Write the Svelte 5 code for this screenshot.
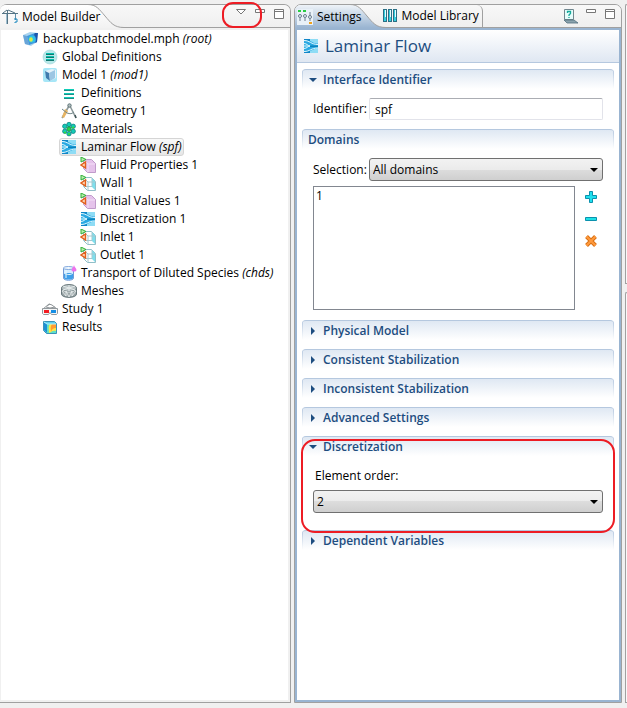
<script>
    let tree = [
        { level: 0, icon: "root", label: "backupbatchmodel.mph", tag: "root" },
        { level: 1, icon: "globals", label: "Global Definitions" },
        { level: 1, icon: "model", label: "Model 1", tag: "mod1" },
        { level: 2, icon: "definitions", label: "Definitions" },
        { level: 2, icon: "geometry", label: "Geometry 1" },
        { level: 2, icon: "materials", label: "Materials" },
        { level: 2, icon: "flow", label: "Laminar Flow", tag: "spf" },
        { level: 3, icon: "domain", label: "Fluid Properties 1" },
        { level: 3, icon: "boundary", label: "Wall 1" },
        { level: 3, icon: "domain", label: "Initial Values 1" },
        { level: 3, icon: "flow", label: "Discretization 1" },
        { level: 3, icon: "boundary", label: "Inlet 1" },
        { level: 3, icon: "boundary", label: "Outlet 1" },
        { level: 2, icon: "species", label: "Transport of Diluted Species", tag: "chds" },
        { level: 2, icon: "mesh", label: "Meshes" },
        { level: 1, icon: "study", label: "Study 1" },
        { level: 1, icon: "results", label: "Results" },
    ];

    let selected = $state(6);
    let identifier = $state("spf");
    let open = $state({ identifier: true, discretization: true });

    function toggle(key) {
        open[key] = !open[key];
    }
</script>

{#snippet icon(name)}
    <svg class="icon" viewBox="0 0 16 16" width="16" height="16" aria-hidden="true">
        {#if name === "root"}
            <path d="M0 4l7-3 8 1-1 9-6 4-6-2z" fill="#a9d3ee" />
            <path d="M0 4l4 1 2 9-4-1z" fill="#69a5d8" />
            <path d="M4 5l8-3 2 9-8 3z" fill="#3f97dc" />
            <ellipse cx="9" cy="8" rx="3.500" ry="3.500" fill="#2cc3ea" />
            <ellipse cx="8" cy="8.500" rx="1.800" ry="2.200" fill="#d9ee45" />
            <path d="M12 2l3 0-1 9-2 1c2-3 1-6-1-8z" fill="#1c57ad" />
        {:else if name === "globals"}
            <circle cx="8" cy="8" r="7" fill="#b9e8e9" stroke="#9ad4d9" stroke-width=".6" />
            <path d="M4 4h8v2H4zM4 7h8v2H4zM4 10h8v2H4z" fill="#08bfae" />
            <path d="M4 5.500h8M4 8.500h8M4 11.500h8" stroke="#11786f" />
        {:else if name === "model"}
            <rect x="1" y="1" width="14" height="14" rx="2" fill="#a6e6f7" />
            <path d="M3 4l7-2 4 1v8l-6 3-4-3z" fill="#e3f2fa" />
            <path d="M3 4l4 2 1 8-4-3z" fill="#3f7cae" />
            <path d="M7 6l6-3v8l-5 3z" fill="#9cc6e3" />
        {:else if name === "definitions"}
            <path d="M3 4h10v2H3zM3 8h10v2H3zM3 12h10v2H3z" fill="#10cdb8" />
            <path d="M3 5.500h10M3 9.500h10M3 13.500h10" stroke="#218b86" />
        {:else if name === "geometry"}
            <path d="M8 3L1 15M9 3l6 12" stroke="#8f9b9c" stroke-width="1.600" fill="none" />
            <path d="M4 6l3 2-4 7-2-1z" fill="#e7b462" />
            <path d="M1 6l5 4c3 1 5 1 7-1" stroke="#71878a" fill="none" />
            <circle cx="8.500" cy="2.500" r="1.700" fill="#b3bfc0" stroke="#5f7578" />
            <path d="M14 12l1 3" stroke="#3f5255" stroke-width="1.500" />
        {:else if name === "materials"}
            <g fill="#13ccb5" stroke="#128385" stroke-width=".8">
                <circle cx="8" cy="3.500" r="2.200" /><circle cx="3.800" cy="5.300" r="2.200" />
                <circle cx="12.200" cy="5.300" r="2.200" /><circle cx="3.800" cy="10.300" r="2.200" />
                <circle cx="12.200" cy="10.300" r="2.200" /><circle cx="8" cy="12.700" r="2.200" />
            </g>
            <circle cx="8" cy="8" r="2.200" fill="#28d74b" stroke="#138453" stroke-width=".8" />
            <path d="M3 11.500h2M11 6.500h2M7 13h2" stroke="#35dd35" stroke-width="1.500" />
        {:else if name === "flow"}
            <path d="M1 1h14v14H1z" fill="#2aa9e2" />
            <path d="M7 1h8v4.500C11 5.500 10 4 7 3zM7 15h8v-4.500c-4 0-5 1.500-8 2.500z" fill="#8edcf5" />
            <path d="M1 1h6v2L1 2zM1 14l6-1v2H1z" fill="#0f86c8" />
            <path d="M1 7h5l2 1-2 1H1z" fill="#7fd3f2" />
            <path d="M7 7.500h8v1.500H7z" fill="#0b82bd" />
            <path d="M1 2.500C7 2.500 8 6.500 15 6.500M1 13.500C7 13.500 8 10 15 10M1 5.500c3 0 4 2.500 6 2.500-2 0-3 2.500-6 2.500" stroke="#e2f8fe" fill="none" />
        {:else if name === "domain"}
            <path d="M3.500 2.500h8l4 4v9h-8l-4-4z" fill="#e5c3eb" stroke="#c09bcb" />
            <path d="M4 3l4 4h7M8 7v8" stroke="#f3dff7" fill="none" />
            <path d="M1 0l5 2.500L1 5z" fill="#b9f0ac" stroke="#2fae37" />
            <path d="M5.500 5v6L1 8z" fill="#ffd9b8" stroke="#e2601c" stroke-width="1.400" />
        {:else if name === "boundary"}
            <path d="M3.500 2.500h8l4 4v9h-8l-4-4z" fill="#fff" stroke="#91bfc8" />
            <path d="M12 3l3 3v9l-3-3z" fill="#7edfed" />
            <path d="M4 3l4 4h7M8 7v8M4 11.500h8V3" stroke="#a5c9d0" fill="none" />
            <path d="M1 0l5 2.500L1 5z" fill="#b9f0ac" stroke="#2fae37" />
            <path d="M5.500 5v6L1 8z" fill="#ffd9b8" stroke="#e2601c" stroke-width="1.400" />
        {:else if name === "species"}
            <path d="M2.500 3v10c0 3 10 3 10 0V3z" fill="#d6edff" stroke="#729bd6" />
            <path d="M3 8h9v5c0 2-9 2-9 0z" fill="#3f9fe9" />
            <path d="M3 8c3 2 7 2 9 0M5 4v9" stroke="#e9f9ff" fill="none" />
            <ellipse cx="7.500" cy="3" rx="5" ry="1.500" fill="#f1faff" stroke="#81a7dd" />
            <path d="M13 0c0 2-2.500 3-2.500 5s5 2 5 0S13 2 13 0z" fill="#ee72eb" />
        {:else if name === "mesh"}
            <path d="M.500 5v6c0 4.500 15 4.500 15 0V5z" fill="#9aa5a7" stroke="#66767a" />
            <ellipse cx="8" cy="5" rx="7.500" ry="3.500" fill="#b9c3c5" stroke="#6e7d80" />
            <path d="M2 3l12 4M14 3L2 7M8 2v6M1 8l4 5V8l3 6 3-6v5l4-5M1 7l4 2 3 0 3 0 4-2" stroke="#eef2f2" stroke-width=".8" fill="none" />
        {:else if name === "study"}
            <path d="M1 8l6-5 3 1 5 4M4 6l4 1 5-1M5 5l3-2" stroke="#8e9497" fill="none" />
            <path d="M.500 7.500h15v5l-1 1H9.500L8 11.500l-1.500 2h-5l-1-1z" fill="#f5f5f5" stroke="#92999d" />
            <path d="M2 9h5v3H2z" fill="#f31c22" />
            <path d="M9 9h5v3H9z" fill="#168fe5" />
        {:else if name === "results"}
            <path d="M1.500 2.500h11l2 2v10h-10l-3-3z" fill="#5fd0ee" stroke="#3a93b8" />
            <path d="M2 3l3 2v9l-3-3z" fill="#1e8fd4" />
            <path d="M5 5h9v9H5z" fill="#5ee0c8" />
            <path d="M8 5h6v7c-4-1-5 2-7 2 0-4-1-6 1-9z" fill="#ffe747" />
            <path d="M10 5h4v4c-3 0-4 1-5 4 0-3-1-5 1-8z" fill="#ff9d32" />
            <path d="M2 3l3 2h9" stroke="#b2f2fa" fill="none" />
        {:else if name === "crane"}
            <path d="M5.500 1v14M0 4.500h16M5 1L1 4M6 1l7 3" stroke="#557485" fill="none" />
            <path d="M4.500 5v10" stroke="#9ebed0" />
            <path d="M13.500 5v6" stroke="#5e8fac" />
            <path d="M12 10h3v3h-2v1" stroke="#1887be" fill="none" />
        {:else if name === "settings"}
            <rect width="16" height="16" fill="#e9f1f8" />
            <path d="M1 2h3M6 2h3" stroke="#28ce42" stroke-width="2" />
            <g stroke="#6a7d8d" fill="none">
                <circle cx="3" cy="7" r="1.500" /><circle cx="8" cy="7" r="1.500" /><circle cx="13" cy="8" r="1.500" />
                <path d="M3 9v3M8 9v3M13 3v4M13 10v2" />
            </g>
            <path d="M12 14h3" stroke="#f0a21c" stroke-width="2" />
        {:else if name === "library"}
            <path d="M1 1h4v13H1zM6 1h4v13H6zM11 1h4v13h-4z" fill="#2b6f85" />
            <path d="M2 2h2v11H2zM7 2h2v11H7zM12 2h2v11h-2z" fill="#35cfe0" />
            <path d="M3.500 2v7M8.500 2v7M13.500 2v7" stroke="#e6fbfd" />
        {:else if name === "help"}
            <path d="M2.500 1.500h9v10h-9z" fill="#e5fcfa" stroke="#71868e" />
            <path d="M2 12h10l4 3H5z" fill="#8ba3ae" stroke="#52707f" stroke-width=".8" />
            <path d="M5.500 5V3.500h3v2L7 7v1M7 9v1" stroke="#15a99b" stroke-width="1.300" fill="none" />
        {/if}
    </svg>
{/snippet}

{#snippet curve(kind)}
    <svg class="curve {kind}" viewBox="0 0 36 23" width="36" height="23" aria-hidden="true">
        <defs>
            <linearGradient id="fill-{kind}" x1="0" y1="0" x2="0" y2="1">
                <stop class="from" offset="0" />
                <stop class="to" offset="1" />
            </linearGradient>
        </defs>
        <path d="M0 0C8 0 11 4 17 11 23 18 26 22.500 36 22.500V23H0z" fill="url(#fill-{kind})" />
        <path d="M0-.5C8-.5 11 4 17 11 23 18 26 22.500 36 22.500" fill="none" stroke="#a0a0a0" />
    </svg>
{/snippet}

{#snippet windowButtons()}
    <button class="tool" aria-label="Minimize">
        <svg viewBox="0 0 12 12" width="12" height="12"><path d="M1.500 1.500h9v3h-9z" fill="#fff" stroke="#777" /></svg>
    </button>
    <button class="tool" aria-label="Maximize">
        <svg viewBox="0 0 12 12" width="12" height="12"><path d="M1.500 1.500h9v9h-9zM1 3.500h10" fill="#fff" stroke="#777" /></svg>
    </button>
{/snippet}

{#snippet heading(key, title)}
    <h2 class="heading">
        <button aria-expanded={!!open[key]} onclick={() => toggle(key)}>
            <svg viewBox="0 0 8 8" width="8" height="8" aria-hidden="true">
                <path d={open[key] ? "M0 2h8L4 6z" : "M2 0l4 4-4 4z"} fill="#1d4d80" />
            </svg>
            {title}
        </button>
    </h2>
{/snippet}

<div class="workbench">
    <section class="panel builder">
        <header class="strip">
            <div class="tab active">{@render icon("crane")}<span>Model Builder</span></div>
            {@render curve("plain")}
            <div class="tools">
                <button class="tool marked" aria-label="View menu">
                    <svg viewBox="0 0 12 12" width="12" height="12"><path d="M1.500 1.500h9L6 6z" fill="#fff" stroke="#777" /></svg>
                </button>
                {@render windowButtons()}
            </div>
        </header>
        <div class="frame">
            <ul class="tree">
                {#each tree as node, i}
                    <li style="padding-left: {node.level * 19 + 20}px">
                        <button class="node" class:selected={selected === i} onclick={() => (selected = i)}>
                            {@render icon(node.icon)}
                            <span>{node.label}{#if node.tag}&nbsp;<em>({node.tag})</em>{/if}</span>
                        </button>
                    </li>
                {/each}
            </ul>
        </div>
    </section>

    <section class="panel settings">
        <header class="strip">
            <div class="tab active">{@render icon("settings")}<span>Settings</span></div>
            {@render curve("blue")}
            <div class="tab other">{@render icon("library")}<span>Model Library</span></div>
            <div class="tools">
                <button class="tool help" aria-label="Help">{@render icon("help")}</button>
                {@render windowButtons()}
            </div>
        </header>
        <div class="frame">
            <h1 class="title">{@render icon("flow")}Laminar Flow</h1>
            <div class="form">
                <section>
                    {@render heading("identifier", "Interface Identifier")}
                    {#if open.identifier}
                        <div class="line">
                            <label for="identifier">Identifier:</label>
                            <input id="identifier" type="text" bind:value={identifier} />
                        </div>
                    {/if}
                </section>

                <section>
                    <h2 class="heading fixed">Domains</h2>
                    <div class="line">
                        <label for="selection">Selection:</label>
                        <div class="combo">
                            <select id="selection">
                                <option>All domains</option>
                                <option>Manual</option>
                            </select>
                        </div>
                    </div>
                    <div class="domains">
                        <select class="list" size="4" aria-label="Selected domains">
                            <option>1</option>
                        </select>
                        <div class="actions">
                            <button aria-label="Add">
                                <svg viewBox="0 0 12 12" width="12" height="12"><path d="M4.500.500h3v4h4v3h-4v4h-3v-4h-4v-3h4z" fill="#1fe0ee" stroke="#0b91ad" /></svg>
                            </button>
                            <button aria-label="Remove">
                                <svg viewBox="0 0 12 12" width="12" height="12"><path d="M.500 4.500h11v3H.500z" fill="#1fe0e6" stroke="#0b91ad" /></svg>
                            </button>
                            <button aria-label="Clear">
                                <svg viewBox="0 0 12 12" width="12" height="12">
                                    <path d="M1.500 1.500l9 9M10.500 1.500l-9 9" stroke="#d96f12" stroke-width="4" />
                                    <path d="M1.500 1.500l9 9M10.500 1.500l-9 9" stroke="#ff9a3d" stroke-width="2" />
                                </svg>
                            </button>
                        </div>
                    </div>
                </section>

                <section>{@render heading("physical", "Physical Model")}</section>
                <section>{@render heading("consistent", "Consistent Stabilization")}</section>
                <section>{@render heading("inconsistent", "Inconsistent Stabilization")}</section>
                <section>{@render heading("advanced", "Advanced Settings")}</section>

                <section class="outlined">
                    {@render heading("discretization", "Discretization")}
                    {#if open.discretization}
                        <div class="stack">
                            <label for="order">Element order:</label>
                            <div class="combo">
                                <select id="order">
                                    <option>1</option>
                                    <option selected>2</option>
                                    <option>3</option>
                                </select>
                            </div>
                        </div>
                    {/if}
                </section>

                <section>{@render heading("dependent", "Dependent Variables")}</section>
            </div>
        </div>
    </section>

    <aside class="edge">
        <div></div>
        <div></div>
    </aside>
</div>

<style>
    :global(body) {
        background: #f0f0f0;
    }

    .workbench {
        box-sizing: border-box;
        min-height: 100vh;
        padding: 4px 0 5px;
        display: grid;
        grid-template-columns: 291fr 328fr 2px;
        gap: 3px;
        background: #f0f0f0;
        color: #000;
        font-family: "Segoe UI", "Open Sans", sans-serif;
        font-size: 12px;
        line-height: 18px;
    }

    button,
    input,
    select {
        box-sizing: border-box;
        margin: 0;
        font: inherit;
        color: inherit;
    }

    button {
        padding: 0;
        border: 0;
        background: none;
        text-align: left;
    }

    .icon {
        flex: none;
        display: block;
    }

    .panel {
        display: flex;
        flex-direction: column;
        min-width: 0;
        border: 1px solid #a0a0a0;
        border-radius: 7px 7px 0 0;
    }

    .builder {
        border-left: 0;
    }

    .strip {
        display: flex;
        height: 22px;
        border-bottom: 1px solid #a0a0a0;
        border-radius: 6px 6px 0 0;
        background: linear-gradient(#f8f8f8, #efefef);
    }

    .tab {
        display: flex;
        align-items: center;
        gap: 4px;
        padding-left: 2px;
        white-space: nowrap;
    }

    .tab.active {
        height: 23px;
        border-radius: 6px 0 0 0;
    }

    .tab.active span {
        position: relative;
        z-index: 1;
        margin-right: -12px;
    }

    .builder .tab.active {
        background: linear-gradient(#ffffff, #f2f2f2);
    }

    .settings .tab.active {
        background: linear-gradient(#eef3f8, #99b4d1);
    }

    .tab.other {
        margin-left: -6px;
        padding-right: 3px;
        border-right: 1px solid #a0a0a0;
        border-radius: 0 6px 0 0;
    }

    .curve {
        flex: none;
        display: block;
        overflow: visible;
    }

    .plain .from {
        stop-color: #ffffff;
    }

    .plain .to {
        stop-color: #f2f2f2;
    }

    .blue .from {
        stop-color: #eef3f8;
    }

    .blue .to {
        stop-color: #99b4d1;
    }

    .tools {
        display: flex;
        gap: 7px;
        margin-left: auto;
        padding: 3px 5px 0 0;
    }

    .tool {
        height: 16px;
    }

    .tool svg {
        display: block;
    }

    .tool:not(.help) {
        height: 12px;
    }

    .marked {
        position: relative;
    }

    .marked::after {
        content: "";
        position: absolute;
        inset: -6px -15px -8px -13px;
        border: 2px solid #ed1c24;
        border-radius: 11px;
    }

    .frame {
        flex: 1;
        display: flex;
        flex-direction: column;
        border: 2px solid #f0f0f0;
        background: #fff;
    }

    .builder .frame {
        border-left-width: 1px;
    }

    .settings .frame {
        border-color: #99b4d1;
    }

    .tree {
        margin: 0;
        padding: 0;
        list-style: none;
    }

    .tree li {
        display: flex;
        height: 18px;
    }

    .node {
        display: flex;
        align-items: center;
        gap: 4px;
        height: 18px;
        padding: 0 1px;
        border: 1px solid transparent;
        border-radius: 3px;
        white-space: nowrap;
    }

    .node.selected {
        border-color: #d5d5d5;
        background: linear-gradient(#f9f9f9, #e6e6e6);
    }

    .title {
        display: flex;
        align-items: center;
        gap: 6px;
        height: 32px;
        margin: 0;
        padding-left: 6px;
        border-bottom: 1px solid #b5c8df;
        background: linear-gradient(#ffffff, #dfe7f2);
        color: #1d4d80;
        font-size: 17px;
        font-weight: 500;
    }

    .form {
        display: flex;
        flex-direction: column;
        gap: 9px;
        padding: 6px 5px;
    }

    .heading {
        position: relative;
        box-sizing: border-box;
        height: 20px;
        margin: 0;
        border-top: 1px solid #b5c8df;
        border-radius: 4px 4px 0 0;
        background:
            linear-gradient(#b5c8df, #ffffff) left / 1px 100% no-repeat,
            linear-gradient(#b5c8df, #ffffff) right / 1px 100% no-repeat,
            linear-gradient(#dfe8f3, #ffffff);
        color: #1d4d80;
        font-size: 12px;
        font-weight: 600;
        line-height: 20px;
    }

    .heading.fixed {
        padding-left: 6px;
    }

    .heading button {
        display: flex;
        align-items: center;
        gap: 6px;
        width: 100%;
        padding-left: 7px;
    }

    .line {
        display: flex;
        align-items: center;
        gap: 2px;
        padding: 9px 11px 0;
    }

    .line input {
        flex: 1;
        min-width: 0;
        height: 22px;
        padding: 0 5px;
        border: 1px solid #e2e3ea;
        border-top-color: #abadb3;
        border-radius: 2px;
        background: #fff;
    }

    .line label {
        min-width: 54px;
    }

    .combo {
        flex: 1;
        position: relative;
    }

    .combo select {
        display: block;
        width: 100%;
        height: 23px;
        padding: 0 20px 0 3px;
        border: 1px solid #707070;
        border-radius: 3px;
        background: linear-gradient(#f2f2f2, #ebebeb 50%, #dddddd 50%, #cfcfcf);
        appearance: none;
    }

    .combo::after {
        content: "";
        position: absolute;
        top: 10px;
        right: 5px;
        border: 4px solid transparent;
        border-top-color: #000;
        border-bottom: 0;
        pointer-events: none;
    }

    .domains {
        display: flex;
        gap: 10px;
        padding: 5px 17px 1px 11px;
    }

    .list {
        flex: 1;
        height: 124px;
        padding: 0;
        border: 1px solid #828790;
        border-radius: 0;
        background: #fff;
    }

    .list option {
        padding: 0 2px;
    }

    .actions {
        display: flex;
        flex-direction: column;
        gap: 10px;
        padding-top: 5px;
    }

    .actions svg {
        display: block;
    }

    .outlined {
        position: relative;
        z-index: 1;
    }

    .outlined::after {
        content: "";
        position: absolute;
        inset: 3px -1px -12px;
        border: 2px solid #ed1c24;
        border-radius: 14px;
        pointer-events: none;
    }

    .stack {
        display: flex;
        flex-direction: column;
        gap: 5px;
        padding: 11px 11px 8px;
    }

    .stack label {
        padding-left: 2px;
    }

    .edge {
        display: flex;
        flex-direction: column;
        gap: 8px;
    }

    .edge div {
        flex: 59;
        border: 1px solid #a0a0a0;
        border-right: 0;
        border-radius: 2px 0 0 0;
        background: #f8f8f8;
    }

    .edge div:first-child {
        flex: 40;
    }
</style>
